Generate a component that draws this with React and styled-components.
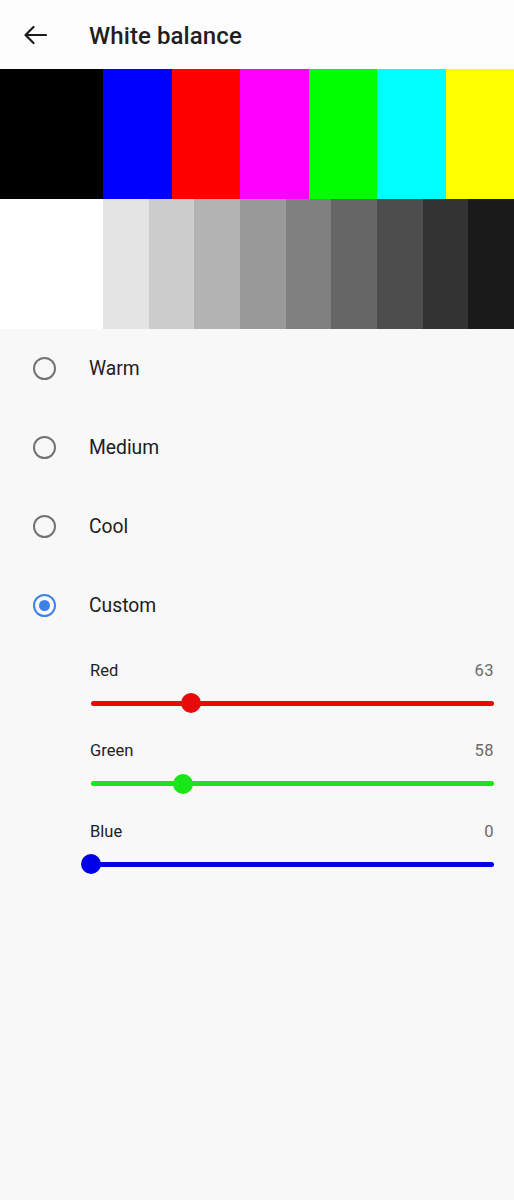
import React from 'react';
import styled, { createGlobalStyle } from 'styled-components';

const GlobalStyle = createGlobalStyle`
  html, body {
    margin: 0;
    padding: 0;
    background: #f8f8f8;
    font-family: Roboto, "Noto Sans", "Liberation Sans", sans-serif;
    -webkit-font-smoothing: antialiased;
  }
`;

const Page = styled.div`
  width: 514px;
  min-height: 1200px;
  background: #f8f8f8;
`;

const Header = styled.header`
  height: 69px;
  display: flex;
  align-items: center;
  background: #fdfdfd;
  padding-left: 22px;
  padding-top: 2px;
  box-sizing: border-box;
`;

const BackButton = styled.button`
  width: 26px;
  height: 26px;
  padding: 0;
  border: none;
  background: none;
  display: flex;
  align-items: center;
  justify-content: center;
  margin-right: 41px;
  margin-top: -2px;
  color: #1c1c1c;
`;

const Title = styled.h1`
  margin: 0;
  font-size: 24px;
  font-weight: 500;
  color: #1f1f1f;
  letter-spacing: 0.1px;
`;

const BarRow = styled.div`
  display: flex;
  height: 130px;
`;

const Bar = styled.div`
  flex: ${p => (p.wide ? '0 0 103px' : '1 1 0')};
  background: ${p => p.color};
`;

const Options = styled.div`
  display: flex;
  flex-direction: column;
`;

const OptionRow = styled.label`
  height: 79px;
  display: flex;
  align-items: center;
  padding-left: 33px;
  cursor: pointer;
`;

const Radio = styled.span`
  width: 23px;
  height: 23px;
  box-sizing: border-box;
  border-radius: 50%;
  border: 2px solid ${p => (p.checked ? '#3f82e6' : '#737373')};
  display: flex;
  align-items: center;
  justify-content: center;
  margin-right: 33px;

  &::after {
    content: '';
    display: ${p => (p.checked ? 'block' : 'none')};
    width: 11px;
    height: 11px;
    border-radius: 50%;
    background: #3f82e6;
  }
`;

const OptionLabel = styled.span`
  font-size: 19.3px;
  color: #202020;
`;

const Sliders = styled.div`
  padding: 14px 20px 0 90px;
  display: flex;
  flex-direction: column;
`;

const SliderBlock = styled.div`
  height: 80.5px;
`;

const SliderHead = styled.div`
  display: flex;
  justify-content: space-between;
  align-items: center;
  height: 22px;
`;

const SliderName = styled.span`
  font-size: 16.5px;
  color: #222;
`;

const SliderValue = styled.span`
  font-size: 16.5px;
  color: #6a6a6a;
  letter-spacing: 0.5px;
`;

const TrackArea = styled.div`
  position: relative;
  height: 20px;
  margin-top: 12px;
  margin-left: 1px;
  display: flex;
  align-items: center;
`;

const Track = styled.div`
  width: 100%;
  height: 5px;
  border-radius: 3px;
  background: ${p => p.color};
`;

const Thumb = styled.div`
  position: absolute;
  top: 50%;
  width: 20px;
  height: 20px;
  border-radius: 50%;
  background: ${p => p.color};
  transform: translate(-50%, -50%);
`;

const ArrowIcon = () => (
  <svg width="24" height="20" viewBox="0 0 24 20" fill="none">
    <path d="M23 10H2.5M10.5 2L2.5 10l8 8" stroke="currentColor" strokeWidth="2.2" strokeLinecap="round" strokeLinejoin="round" />
  </svg>
);

const colorBars = ['#000000', '#0000ff', '#ff0000', '#ff00ff', '#00ff00', '#00ffff', '#ffff00'];
const grayBars = ['#ffffff', '#e4e4e4', '#cccccc', '#b3b3b3', '#999999', '#808080', '#666666', '#4d4d4d', '#333333', '#1a1a1a'];

const options = ['Warm', 'Medium', 'Cool', 'Custom'];

const sliders = [
  { name: 'Red', value: 63, color: '#e8090b' },
  { name: 'Green', value: 58, color: '#19e619' },
  { name: 'Blue', value: 0, color: '#0000e6' },
];

export default function App() {
  const selected = 'Custom';
  return (
    <Page>
      <GlobalStyle />
      <Header>
        <BackButton aria-label="Back">
          <ArrowIcon />
        </BackButton>
        <Title>White balance</Title>
      </Header>

      <BarRow>
        {colorBars.map((c, i) => (
          <Bar key={c} color={c} wide={i === 0} />
        ))}
      </BarRow>
      <BarRow>
        {grayBars.map((c, i) => (
          <Bar key={c} color={c} wide={i === 0} />
        ))}
      </BarRow>

      <Options>
        {options.map(o => (
          <OptionRow key={o}>
            <Radio checked={o === selected} />
            <OptionLabel>{o}</OptionLabel>
          </OptionRow>
        ))}
      </Options>

      <Sliders>
        {sliders.map(s => (
          <SliderBlock key={s.name}>
            <SliderHead>
              <SliderName>{s.name}</SliderName>
              <SliderValue>{s.value}</SliderValue>
            </SliderHead>
            <TrackArea>
              <Track color={s.color} />
              <Thumb color={s.color} style={{ left: `${(s.value / 255) * 100}%` }} />
            </TrackArea>
          </SliderBlock>
        ))}
      </Sliders>
    </Page>
  );
}
